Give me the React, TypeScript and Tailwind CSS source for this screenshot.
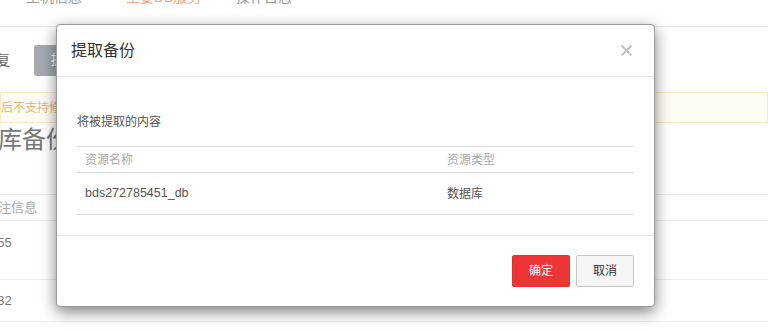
import { X } from "lucide-react";

const font = "font-['Liberation_Sans','Noto_Sans_CJK_SC',sans-serif]";

function BackgroundPage() {
  return (
    <div className="flex flex-col">
      {/* tabs, scrolled mostly out of view */}
      <div className="flex h-[27px] overflow-hidden border-b border-[#e8e8e8] pl-[26px] text-[14px] leading-[14px]">
        <span className="-mt-[10px] w-[100px] text-[#999]">主机信息</span>
        <span className="-mt-[10px] w-[110px] text-[#f5a184]">主要DB服务</span>
        <span className="-mt-[10px] w-[100px] text-[#999]">操作日志</span>
      </div>

      {/* toolbar */}
      <div className="flex h-[65px] items-center gap-[24px] pt-[1px]">
        <span className="-ml-[18px] text-[14px] text-[#666]">恢复</span>
        <button
          type="button"
          className="h-[31px] w-[90px] rounded-[3px] bg-[#a5a9b0] pl-[17px] text-left text-[13px] text-white"
        >
          提取备份
        </button>
      </div>

      {/* notice */}
      <div className="flex h-[31px] items-center overflow-hidden border border-[#fbe8c8] bg-[#fffdf3] text-[12px] text-[#e2b684]">
        <span className="-ml-[48px] whitespace-nowrap">备份恢复后不支持修改恢复的数据库名称</span>
      </div>

      {/* page title */}
      <div className="h-[71px] overflow-hidden pt-[2px]">
        <span className="-ml-[50px] block whitespace-nowrap text-[24px] leading-[30px] text-[#777]">数据库备份</span>
      </div>

      {/* table */}
      <div className="flex h-[26px] items-center border-t border-[#ececec] text-[13px] text-[#aaa]">
        <span className="-ml-[15px]">备注信息</span>
      </div>
      <div className="h-[59px] border-t border-[#ececec] pt-[14px] text-[13px] text-[#777]">
        <span className="-ml-[10px] block leading-[16px]">255</span>
      </div>
      <div className="h-[42px] border-t border-[#ececec] pt-[13px] text-[13px] text-[#777]">
        <span className="-ml-[10px] block leading-[16px]">232</span>
      </div>
      <div className="border-t border-[#ececec]" />
    </div>
  );
}

function ExtractDialog() {
  return (
    <div className="absolute left-[56px] top-[24px] flex w-[599px] flex-col rounded-[4px] border border-[#9a9a9a] bg-white shadow-[0_5px_15px_rgba(0,0,0,0.5)]">
      <div className="flex h-[52px] items-center justify-between border-b border-[#e5e5e5] pl-[14px] pr-[19px]">
        <h2 className="text-[16px] text-[#333]">提取备份</h2>
        <X size={17} strokeWidth={3} className="text-[#c2c2c2]" />
      </div>

      <div className="flex h-[158px] flex-col px-[20px] pt-[38px]">
        <p className="text-[12px] leading-[14px] text-[#555]">将被提取的内容</p>
        <table className="mt-[17px] w-full border-collapse text-[12px]">
          <thead>
            <tr className="h-[26px] border-y border-[#dcdcdc] text-left text-[#aaa]">
              <th className="w-[362px] pl-[8px] font-normal">资源名称</th>
              <th className="pl-[8px] font-normal">资源类型</th>
            </tr>
          </thead>
          <tbody>
            <tr className="h-[42px] border-b border-[#dcdcdc] text-[#555]">
              <td className="pl-[8px] text-[12.5px]">bds272785451_db</td>
              <td className="pl-[8px]">数据库</td>
            </tr>
          </tbody>
        </table>
      </div>

      <div className="flex h-[71px] items-center justify-end gap-[6px] border-t border-[#e5e5e5] pr-[20px]">
        <button
          type="button"
          className="h-[32px] w-[58px] rounded-[2px] border border-[#e23030] bg-[#ee3535] text-[12px] text-white"
        >
          确定
        </button>
        <button
          type="button"
          className="h-[32px] w-[58px] rounded-[2px] border border-[#c8c8c8] bg-[#f5f5f5] text-[12px] text-[#333]"
        >
          取消
        </button>
      </div>
    </div>
  );
}

export default function App() {
  return (
    <div className={`relative h-[332px] w-[768px] overflow-hidden bg-white ${font}`}>
      <BackgroundPage />
      <ExtractDialog />
    </div>
  );
}
